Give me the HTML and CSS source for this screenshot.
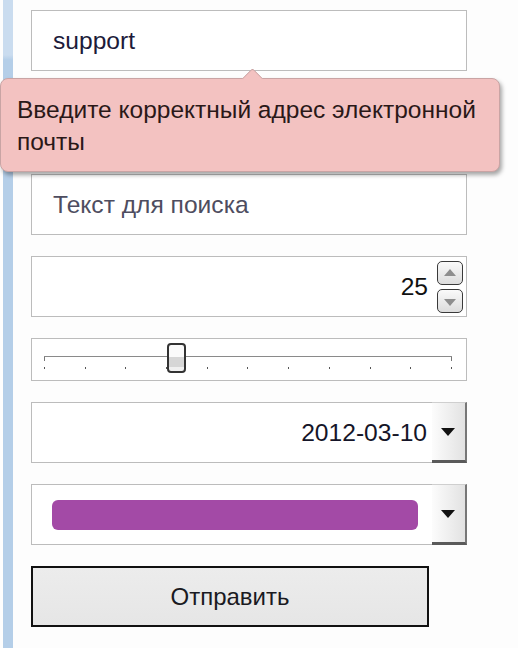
FILE: index.html
```html
<!DOCTYPE html>
<html lang="ru">
<head>
    <meta charset="UTF-8">
    <meta name="viewport" content="width=device-width, initial-scale=1.0">
    <title>Форма</title>
    <link rel="stylesheet" href="styles.css">
</head>
<body>

    <div class="page">
        <div class="strip"></div>

        <!-- Form -->
        <form class="form" onsubmit="return false">
            <div class="field-wrap">
                <div class="field text-field">support</div>
                <div class="tooltip">Введите корректный адрес электронной почты</div>
            </div>

            <div class="field text-field"></div>

            <div class="field text-field placeholder">Текст для поиска</div>

            <div class="field number-field">
                <span class="value">25</span>
                <div class="spinner">
                    <span class="spin up"></span>
                    <span class="spin down"></span>
                </div>
            </div>

            <div class="field range-field">
                <div class="track">
                    <div class="ticks">
                        <i></i><i></i><i></i><i></i><i></i><i></i>
                        <i></i><i></i><i></i><i></i><i></i>
                    </div>
                    <div class="thumb"></div>
                </div>
            </div>

            <div class="field select-field">
                <span class="value">2012-03-10</span>
                <span class="drop"><b class="caret"></b></span>
            </div>

            <div class="field select-field">
                <span class="swatch"></span>
                <span class="drop"><b class="caret"></b></span>
            </div>

            <button class="submit" type="submit">Отправить</button>
        </form>
    </div>

</body>
</html>
```

FILE: styles.css
```css
/* Reset and global styling */
* {
    margin: 0;
    padding: 0;
    box-sizing: border-box;
}
body {
    font-family: 'Liberation Sans', Arial, sans-serif;
    background-color: #fdfdfd;
    color: #1c1b30;
    width: 518px;
    height: 648px;
    overflow: hidden;
}

/* Page layout */
.page {
    display: flex;
    height: 648px;
    padding-left: 3px;
}
.strip {
    width: 10px;
    background: linear-gradient(to bottom, #cadcef 0, #cadcef 55px, #b4cee8 60px, #b4cee8 100%);
}
.form {
    display: flex;
    flex-direction: column;
    gap: 21px;
    padding: 10px 0 0 18px;
    width: 454px;
}

/* Fields */
.field-wrap {
    position: relative;
}
.field {
    height: 61px;
    border: 1px solid #bcbcbc;
    background-color: #fff;
    display: flex;
    align-items: center;
    font-size: 24.6px;
}
.text-field {
    padding-left: 21px;
    color: #1c1b3a;
}
.placeholder {
    color: #4e4d60;
}

/* Validation tooltip */
.tooltip {
    position: absolute;
    top: 68px;
    left: -31px;
    width: 500px;
    z-index: 5;
    background-color: #f3c2c1;
    border: 1px solid #c9a4a4;
    border-radius: 8px;
    box-shadow: 2px 3px 4px rgba(0, 0, 0, 0.35);
    padding: 15px 10px 13px 16px;
    font-size: 24.5px;
    line-height: 32px;
    color: #2a1818;
}
.tooltip::before {
    content: "";
    position: absolute;
    top: -8px;
    left: 244px;
    width: 14px;
    height: 14px;
    background-color: #f3c2c1;
    border-top: 1px solid #c9a4a4;
    border-left: 1px solid #c9a4a4;
    border-top-left-radius: 3px;
    transform: rotate(45deg);
}

/* Number input */
.number-field {
    justify-content: flex-end;
    padding-right: 3px;
    color: #111;
}
.number-field .value {
    margin-right: 9px;
}
.spinner {
    display: flex;
    flex-direction: column;
    gap: 4px;
}
.spin {
    position: relative;
    width: 26px;
    height: 24px;
    border: 1px solid #3a3a3a;
    border-radius: 5px;
    background: linear-gradient(to bottom, #fafafa, #dcdcdc);
}
.spin::after {
    content: "";
    position: absolute;
    left: 6px;
    border-left: 6px solid transparent;
    border-right: 6px solid transparent;
}
.spin.up::after {
    top: 7px;
    border-bottom: 7px solid #8e8e8e;
}
.spin.down::after {
    top: 9px;
    border-top: 7px solid #8e8e8e;
}

/* Range slider */
.range-field {
    height: 43px;
    padding: 0 14px 0 12px;
}
.track {
    position: relative;
    width: 100%;
    height: 14px;
    border-top: 1px solid #8a8a8a;
    margin-top: 6px;
}
.track::before,
.track::after {
    content: "";
    position: absolute;
    top: 0;
    width: 1px;
    height: 4px;
    background-color: #777;
}
.track::before {
    left: 0;
}
.track::after {
    right: 0;
}
.ticks {
    display: flex;
    justify-content: space-between;
    padding-top: 10px;
}
.ticks i {
    width: 1px;
    height: 2px;
    background-color: #555;
}
.thumb {
    position: absolute;
    top: -14px;
    left: 123px;
    width: 19px;
    height: 30px;
    border: 2px solid #333;
    border-radius: 4px;
    background: linear-gradient(to bottom, #fafafa 0, #fafafa 45%, #d6d6d6 45%, #d6d6d6 85%, #f0f0f0 85%);
}

/* Select boxes */
.select-field {
    justify-content: flex-end;
    padding: 0;
    color: #151528;
}
.select-field .value {
    margin-right: 5px;
}
.drop {
    align-self: stretch;
    width: 35px;
    margin: -1px -1px -1px 0;
    background: linear-gradient(to right, #fcfcfc, #e2e2e2);
    border-right: 2px solid #777;
    border-bottom: 3px solid #5a5a5a;
    border-top: 1px solid #cfcfcf;
    display: flex;
    align-items: center;
    justify-content: center;
}
.caret {
    width: 0;
    height: 0;
    margin: 1px 2px 0 0;
    border-left: 7px solid transparent;
    border-right: 7px solid transparent;
    border-top: 8px solid #111;
}
.swatch {
    flex: 1;
    height: 30px;
    margin: 0 14px 0 20px;
    border-radius: 6px;
    background-color: #a34aa6;
}

/* Submit button */
.submit {
    width: 398px;
    height: 61px;
    border: 2px solid #111;
    background: linear-gradient(to bottom, #ececec, #e6e6e6);
    font-family: 'Liberation Sans', Arial, sans-serif;
    font-size: 24px;
    color: #1a1a22;
    cursor: pointer;
}
```
